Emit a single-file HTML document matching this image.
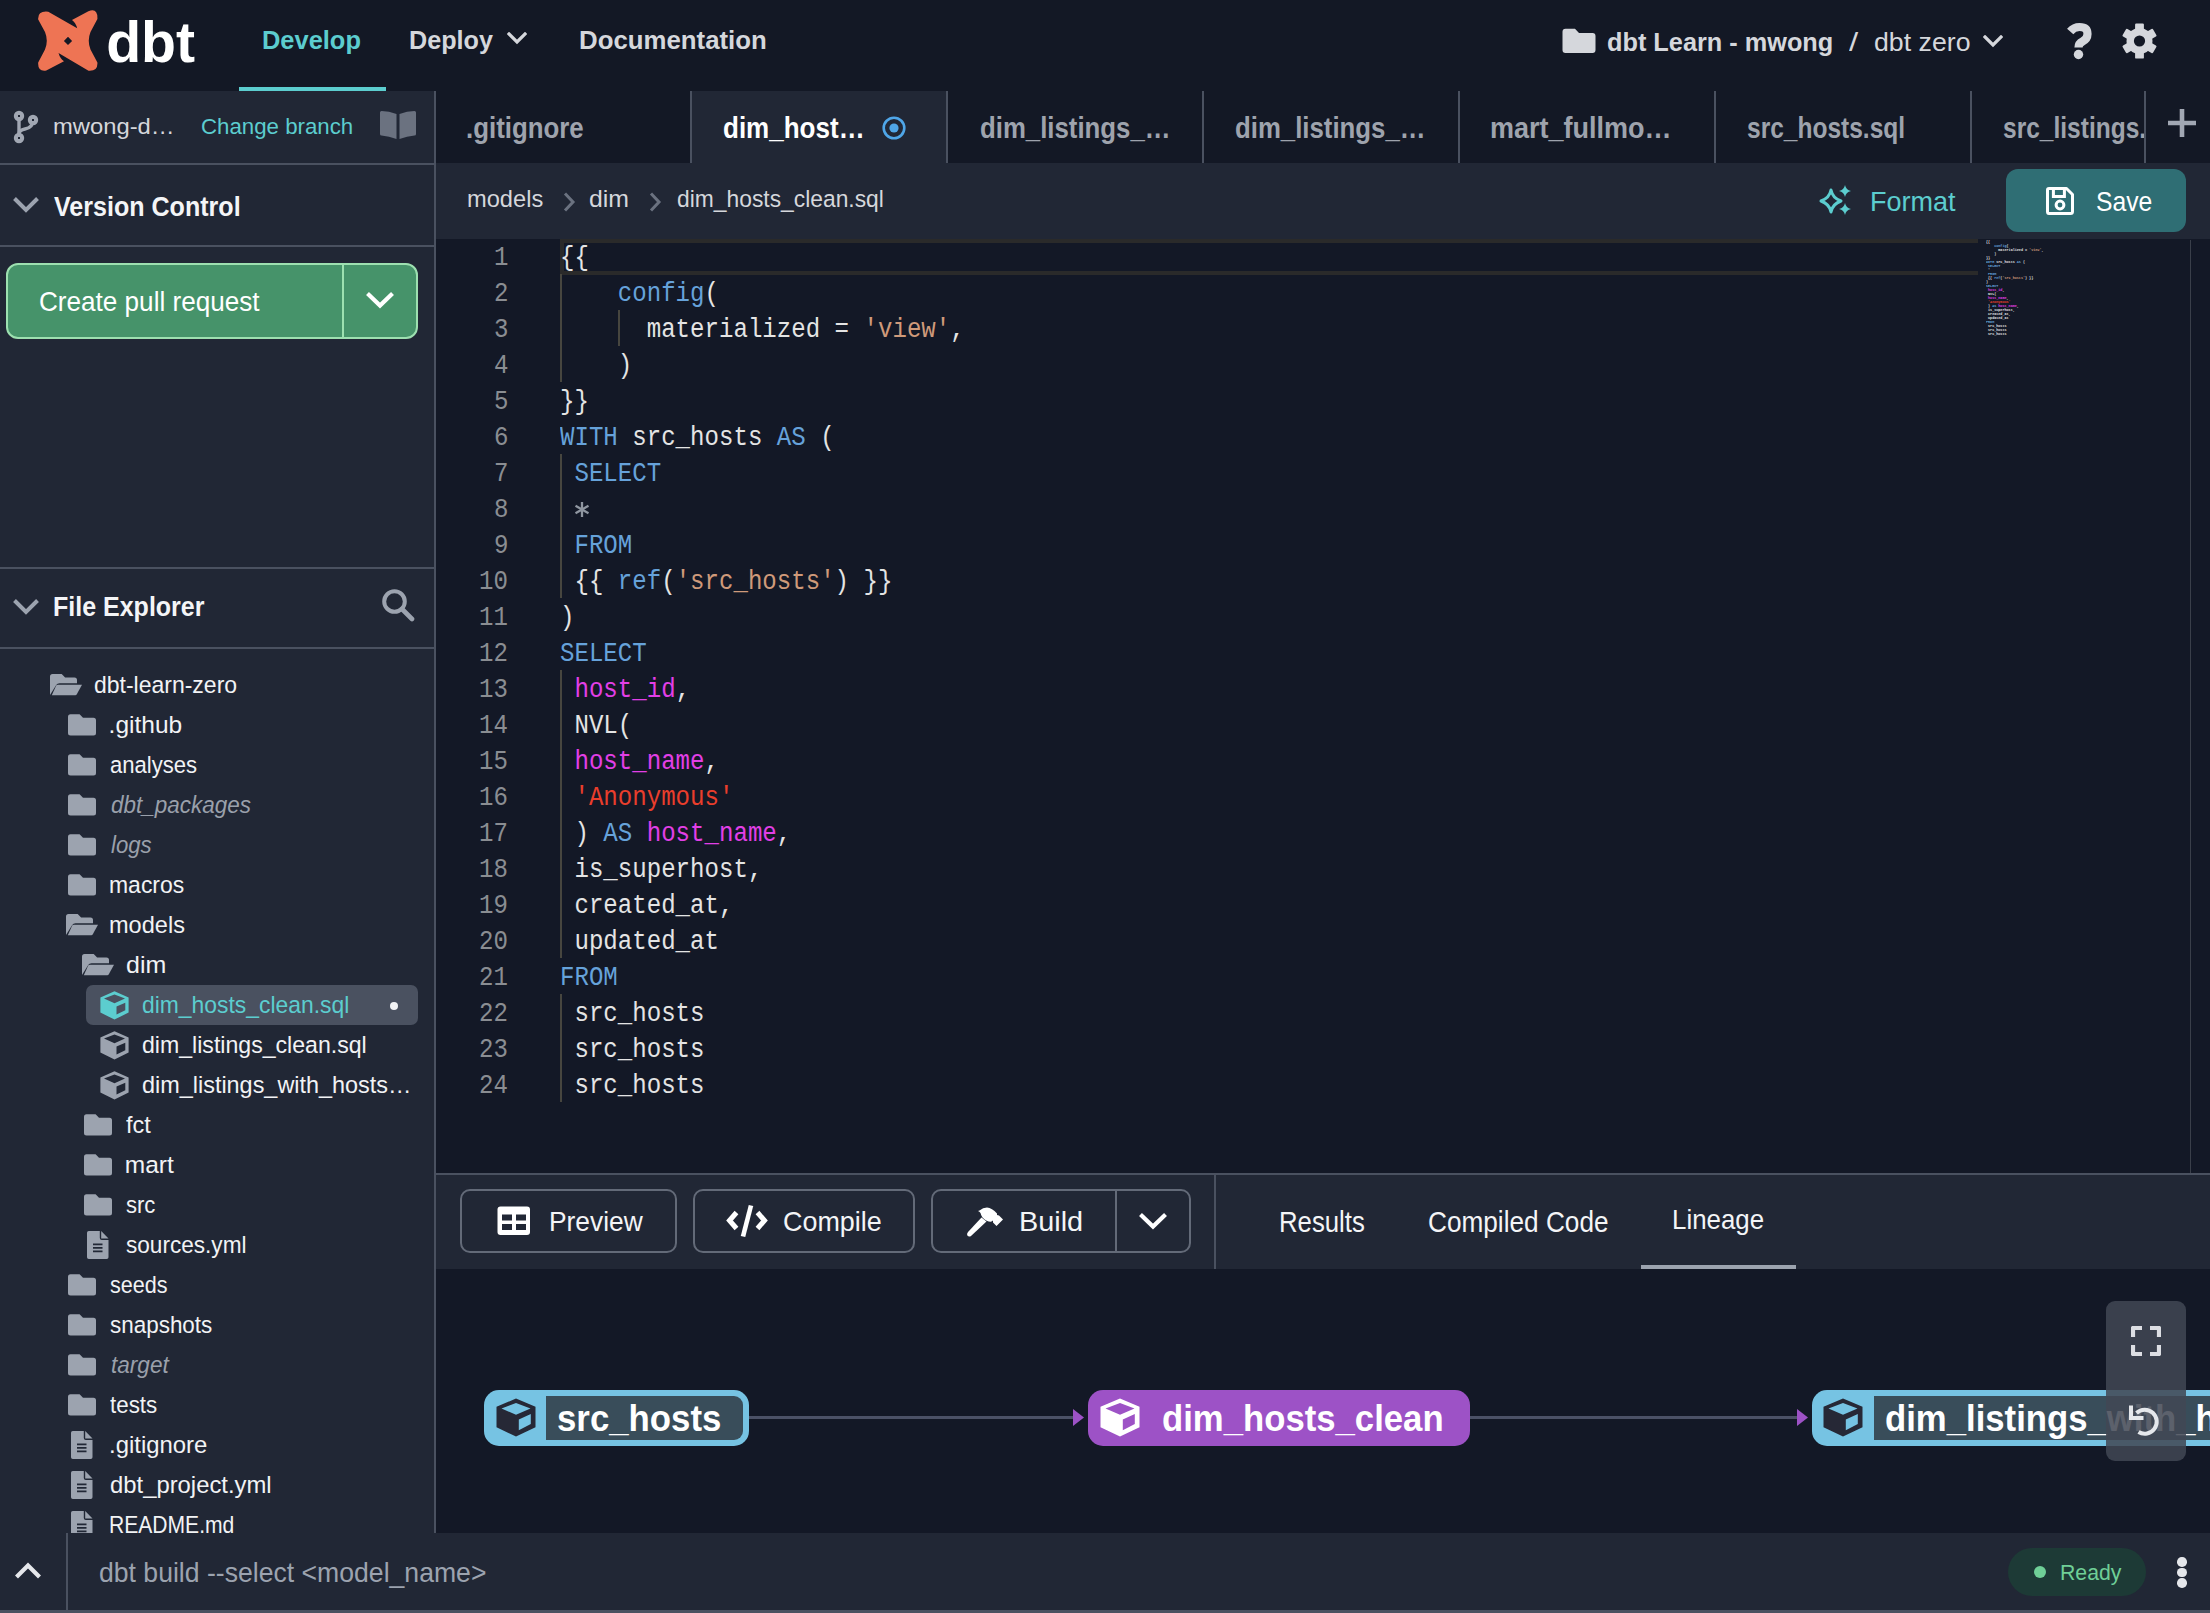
<!DOCTYPE html>
<html><head><meta charset="utf-8"><style>
html,body{margin:0;padding:0;width:2210px;height:1613px;overflow:hidden;background:#131826;}
body>div{position:absolute;}
.tS,.tM{position:absolute;white-space:pre;line-height:1;transform-origin:0 0;}
.tS{font-family:"Liberation Sans",sans-serif;}
.tM{font-family:"Liberation Mono",monospace;}
</style></head><body>
<div style="left:0px;top:0px;width:2210px;height:91px;background:#131825;"></div>
<div style="left:0px;top:91px;width:434px;height:1442px;background:#212735;"></div>
<div style="left:434px;top:91px;width:2px;height:1442px;background:#4a5160;"></div>
<div style="left:0px;top:163px;width:434px;height:2px;background:#4a5160;"></div>
<div style="left:0px;top:245px;width:434px;height:2px;background:#4a5160;"></div>
<div style="left:0px;top:567px;width:434px;height:2px;background:#4a5160;"></div>
<div style="left:0px;top:647px;width:434px;height:2px;background:#4a5160;"></div>
<div style="left:239px;top:87px;width:147px;height:4px;background:#5ccdcf;"></div>
<div style="left:436px;top:91px;width:1774px;height:72px;background:#131825;"></div>
<div style="left:692px;top:91px;width:254px;height:72px;background:#212735;"></div>
<div style="left:690px;top:91px;width:2px;height:72px;background:#4a5160;"></div>
<div style="left:946px;top:91px;width:2px;height:72px;background:#4a5160;"></div>
<div style="left:1202px;top:91px;width:2px;height:72px;background:#4a5160;"></div>
<div style="left:1458px;top:91px;width:2px;height:72px;background:#4a5160;"></div>
<div style="left:1714px;top:91px;width:2px;height:72px;background:#4a5160;"></div>
<div style="left:1970px;top:91px;width:2px;height:72px;background:#4a5160;"></div>
<div style="left:2144px;top:91px;width:2px;height:72px;background:#4a5160;"></div>
<div style="left:436px;top:163px;width:1774px;height:76px;background:#212735;"></div>
<div style="left:436px;top:239px;width:1774px;height:934px;background:#131826;"></div>
<div style="left:560px;top:239px;width:1418px;height:36px;background:transparent;border:4px solid #2a2a2a;box-sizing:border-box;border-right:none;"></div>
<div style="left:2190px;top:240px;width:1px;height:933px;background:#3a3f4a;"></div>
<div style="left:436px;top:1173px;width:1774px;height:2px;background:#4a5160;"></div>
<div style="left:436px;top:1175px;width:1774px;height:94px;background:#212735;"></div>
<div style="left:1214px;top:1175px;width:2px;height:94px;background:#4a5160;"></div>
<div style="left:1641px;top:1265px;width:155px;height:4px;background:#9ca3af;"></div>
<div style="left:436px;top:1269px;width:1774px;height:264px;background:#131826;"></div>
<div style="left:6px;top:263px;width:412px;height:76px;background:#46936a;border:2px solid #9de0b0;border-radius:12px;box-sizing:border-box;"></div>
<div style="left:342px;top:265px;width:2px;height:72px;background:#9de0b0;"></div>
<div style="left:2006px;top:169px;width:180px;height:63px;background:#2f6e74;border-radius:12px;"></div>
<div style="left:460px;top:1189px;width:217px;height:64px;background:transparent;border:2px solid #636a78;border-radius:10px;box-sizing:border-box;"></div>
<div style="left:693px;top:1189px;width:222px;height:64px;background:transparent;border:2px solid #636a78;border-radius:10px;box-sizing:border-box;"></div>
<div style="left:931px;top:1189px;width:260px;height:64px;background:transparent;border:2px solid #636a78;border-radius:10px;box-sizing:border-box;"></div>
<div style="left:1115px;top:1191px;width:2px;height:60px;background:#636a78;"></div>
<div style="left:86px;top:985px;width:332px;height:40px;background:#4a5160;border-radius:7px;"></div>
<div style="left:748px;top:1416px;width:328px;height:3px;background:#4b5166;"></div>
<div style="left:1470px;top:1416px;width:328px;height:3px;background:#4b5166;"></div>
<svg style="position:absolute;left:1073px;top:1409px;" width="11" height="17" viewBox="0 0 11 17"><path d="M0 0 L11 8.5 L0 17Z" fill="#9d52c6"/></svg>
<svg style="position:absolute;left:1797px;top:1409px;" width="11" height="17" viewBox="0 0 11 17"><path d="M0 0 L11 8.5 L0 17Z" fill="#9d52c6"/></svg>
<div style="left:484px;top:1390px;width:265px;height:56px;background:#76c3e3;border-radius:15px;"></div>
<div style="left:546px;top:1396px;width:197px;height:44px;background:#394d5a;border-radius:0 9px 9px 0;"></div>
<div style="left:1088px;top:1390px;width:382px;height:56px;background:#9d52c6;border-radius:15px;"></div>
<div style="left:1812px;top:1390px;width:420px;height:56px;background:#76c3e3;border-radius:15px;"></div>
<div style="left:1874px;top:1396px;width:400px;height:44px;background:#394d5a;"></div>
<svg style="position:absolute;left:496px;top:1398px;" width="40" height="39" viewBox="0 0 40 39"><path fill="#262836" fill-rule="evenodd" d="M20 0.5 L39.5 8.8 L39.5 29.2 L20 38.5 L0.5 29.2 L0.5 8.8Z M5.5 10.5 L20 16.8 L34.5 10.5 L20 5 Z M22.8 21.5 L22.8 32.3 L34.8 26 L34.8 16Z"/></svg>
<svg style="position:absolute;left:1100px;top:1398px;" width="40" height="39" viewBox="0 0 40 39"><path fill="#ffffff" fill-rule="evenodd" d="M20 0.5 L39.5 8.8 L39.5 29.2 L20 38.5 L0.5 29.2 L0.5 8.8Z M5.5 10.5 L20 16.8 L34.5 10.5 L20 5 Z M22.8 21.5 L22.8 32.3 L34.8 26 L34.8 16Z"/></svg>
<svg style="position:absolute;left:1823px;top:1398px;" width="40" height="39" viewBox="0 0 40 39"><path fill="#262836" fill-rule="evenodd" d="M20 0.5 L39.5 8.8 L39.5 29.2 L20 38.5 L0.5 29.2 L0.5 8.8Z M5.5 10.5 L20 16.8 L34.5 10.5 L20 5 Z M22.8 21.5 L22.8 32.3 L34.8 26 L34.8 16Z"/></svg>
<svg style="position:absolute;left:34px;top:8px;" width="68" height="66" viewBox="0 0 68 66"><path fill="#ee7454" fill-rule="evenodd" d="M14.3 3.7 L43.2 20.3 Q41.5 14.5 38 12.1 L54.4 3.3 Q63.8 -0.5 63.4 11 L56.5 24 Q53 32.7 56.5 41.5 L63.4 54.5 Q64 63.5 54.5 62.8 L24.5 45 Q26 50.5 30 53.2 L12.3 62.6 Q3.5 64 4.2 54.5 L11 41.5 Q14.6 32.7 11 24 L4.2 11.5 Q3.5 2.5 14.3 3.7 Z M34 28.8 L38.1 32.9 L34 37 L29.9 32.9 Z"/></svg>
<svg style="position:absolute;left:507px;top:32px;" width="20" height="13" viewBox="0 0 20 13"><path d="M2 2 L10 10 L18 2" fill="none" stroke="#d5d7dc" stroke-width="3.2" stroke-linecap="square"/></svg>
<svg style="position:absolute;left:1983px;top:35px;" width="20" height="13" viewBox="0 0 20 13"><path d="M2 2 L10 10 L18 2" fill="none" stroke="#d5d7dc" stroke-width="3.2" stroke-linecap="square"/></svg>
<svg style="position:absolute;left:1562px;top:28px;" width="34" height="26" viewBox="0 0 34 26"><path fill="#d5d7dc" d="M3.5 0.8 H13 L17 5 H30.5 A3 3 0 0 1 33.5 8 V22 A3 3 0 0 1 30.5 25 H3.5 A3 3 0 0 1 0.5 22 V3.8 A3 3 0 0 1 3.5 0.8Z"/></svg>
<svg style="position:absolute;left:2064px;top:20px;" width="32" height="42" viewBox="0 0 32 42"><path d="M6.2 11.5 Q10 7 15.5 7 Q23.5 7 23.5 14 Q23.5 19 18.5 21.5 Q14.5 23.5 14.5 27.5" fill="none" stroke="#d5d7dc" stroke-width="8.2" stroke-linejoin="round"/><circle cx="14.5" cy="34.5" r="4.7" fill="#d5d7dc"/></svg>
<svg style="position:absolute;left:2122px;top:23px;" width="35" height="36" viewBox="0 0 35 36"><g transform="translate(17.5 18)" fill="#d5d7dc"><circle r="13"/><rect x="-4.4" y="-17.6" width="8.8" height="35.2" rx="1.2"/><rect x="-4.4" y="-17.6" width="8.8" height="35.2" rx="1.2" transform="rotate(60)"/><rect x="-4.4" y="-17.6" width="8.8" height="35.2" rx="1.2" transform="rotate(120)"/><circle r="5.6" fill="#131825"/></g></svg>
<svg style="position:absolute;left:10px;top:108px;" width="30" height="38" viewBox="0 0 30 38"><g fill="#a1a7b3"><circle cx="9" cy="8" r="5.2"/><circle cx="23" cy="12" r="5.2"/><circle cx="9" cy="30" r="5.2"/><path d="M9 8 V30" stroke="#a1a7b3" stroke-width="3.4"/><path d="M9 26 Q9 22 15 21 Q23 19.5 23 12" fill="none" stroke="#a1a7b3" stroke-width="3.4"/></g><g fill="#212735"><rect x="8" y="7" width="2" height="2"/><rect x="22" y="11" width="2" height="2"/><rect x="8" y="29" width="2" height="2"/></g></svg>
<svg style="position:absolute;left:379px;top:110px;" width="38" height="30" viewBox="0 0 38 30"><g fill="#6b7280"><path d="M1 2.5 Q1 1 2.5 1 Q10 1 17.5 4 V29 Q10 26 2.5 25.5 Q1 25.5 1 24 Z"/><path d="M37 2.5 Q37 1 35.5 1 Q28 1 20.5 4 V29 Q28 26 35.5 25.5 Q37 25.5 37 24 Z"/></g></svg>
<svg style="position:absolute;left:12px;top:196px;" width="28" height="18" viewBox="0 0 28 18"><path d="M2.5 2.5 L14 14 L25.5 2.5" fill="none" stroke="#9ca3af" stroke-width="4"/></svg>
<svg style="position:absolute;left:12px;top:598px;" width="28" height="18" viewBox="0 0 28 18"><path d="M2.5 2.5 L14 14 L25.5 2.5" fill="none" stroke="#9ca3af" stroke-width="4"/></svg>
<svg style="position:absolute;left:365px;top:291px;" width="30" height="19" viewBox="0 0 30 19"><path d="M2.5 2.5 L15 14.5 L27.5 2.5" fill="none" stroke="#ffffff" stroke-width="4.2"/></svg>
<svg style="position:absolute;left:381px;top:588px;" width="34" height="34" viewBox="0 0 34 34"><circle cx="13.5" cy="13.5" r="10.3" fill="none" stroke="#9ca3af" stroke-width="4"/><path d="M21 21 L31 31" stroke="#9ca3af" stroke-width="4.6" stroke-linecap="round"/></svg>
<svg style="position:absolute;left:50px;top:674px;" width="32" height="22" viewBox="0 0 32 22"><path fill="#9ca3af" d="M2.5 0 H11.7 L15.1 3.6 H24.5 A2.5 2.5 0 0 1 27 6.1 V9.2 H9.5 Q7.3 9.2 6.2 11 L0 21 V2.5 A2.5 2.5 0 0 1 2.5 0Z"/><path fill="#9ca3af" d="M6.3 11.2 Q7 10.7 8 10.7 H32 L26.8 20.3 Q26.3 21.2 25.3 21.2 H1.8 Z"/></svg>
<svg style="position:absolute;left:68px;top:714px;" width="28" height="22" viewBox="0 0 28 22"><path fill="#9ca3af" d="M2.5 0.2 H11.6 L15 3.8 H25.5 A2.5 2.5 0 0 1 28 6.3 V19 A2.5 2.5 0 0 1 25.5 21.5 H2.5 A2.5 2.5 0 0 1 0 19 V2.7 A2.5 2.5 0 0 1 2.5 0.2Z"/></svg>
<svg style="position:absolute;left:68px;top:754px;" width="28" height="22" viewBox="0 0 28 22"><path fill="#9ca3af" d="M2.5 0.2 H11.6 L15 3.8 H25.5 A2.5 2.5 0 0 1 28 6.3 V19 A2.5 2.5 0 0 1 25.5 21.5 H2.5 A2.5 2.5 0 0 1 0 19 V2.7 A2.5 2.5 0 0 1 2.5 0.2Z"/></svg>
<svg style="position:absolute;left:68px;top:794px;" width="28" height="22" viewBox="0 0 28 22"><path fill="#9ca3af" d="M2.5 0.2 H11.6 L15 3.8 H25.5 A2.5 2.5 0 0 1 28 6.3 V19 A2.5 2.5 0 0 1 25.5 21.5 H2.5 A2.5 2.5 0 0 1 0 19 V2.7 A2.5 2.5 0 0 1 2.5 0.2Z"/></svg>
<svg style="position:absolute;left:68px;top:834px;" width="28" height="22" viewBox="0 0 28 22"><path fill="#9ca3af" d="M2.5 0.2 H11.6 L15 3.8 H25.5 A2.5 2.5 0 0 1 28 6.3 V19 A2.5 2.5 0 0 1 25.5 21.5 H2.5 A2.5 2.5 0 0 1 0 19 V2.7 A2.5 2.5 0 0 1 2.5 0.2Z"/></svg>
<svg style="position:absolute;left:68px;top:874px;" width="28" height="22" viewBox="0 0 28 22"><path fill="#9ca3af" d="M2.5 0.2 H11.6 L15 3.8 H25.5 A2.5 2.5 0 0 1 28 6.3 V19 A2.5 2.5 0 0 1 25.5 21.5 H2.5 A2.5 2.5 0 0 1 0 19 V2.7 A2.5 2.5 0 0 1 2.5 0.2Z"/></svg>
<svg style="position:absolute;left:66px;top:914px;" width="32" height="22" viewBox="0 0 32 22"><path fill="#9ca3af" d="M2.5 0 H11.7 L15.1 3.6 H24.5 A2.5 2.5 0 0 1 27 6.1 V9.2 H9.5 Q7.3 9.2 6.2 11 L0 21 V2.5 A2.5 2.5 0 0 1 2.5 0Z"/><path fill="#9ca3af" d="M6.3 11.2 Q7 10.7 8 10.7 H32 L26.8 20.3 Q26.3 21.2 25.3 21.2 H1.8 Z"/></svg>
<svg style="position:absolute;left:82px;top:954px;" width="32" height="22" viewBox="0 0 32 22"><path fill="#9ca3af" d="M2.5 0 H11.7 L15.1 3.6 H24.5 A2.5 2.5 0 0 1 27 6.1 V9.2 H9.5 Q7.3 9.2 6.2 11 L0 21 V2.5 A2.5 2.5 0 0 1 2.5 0Z"/><path fill="#9ca3af" d="M6.3 11.2 Q7 10.7 8 10.7 H32 L26.8 20.3 Q26.3 21.2 25.3 21.2 H1.8 Z"/></svg>
<svg style="position:absolute;left:100px;top:991px;" width="29" height="29" viewBox="0 0 29 29"><path fill="#5ccdcf" fill-rule="evenodd" d="M14.5 0.3 L28.6 6.4 L28.6 21.5 L14.5 28.6 L0.4 21.5 L0.4 6.4Z M4 7.6 L14.5 12.2 L25 7.6 L14.5 3.6 Z M16.5 15.5 L16.5 23.6 L25.3 19.2 L25.3 11.7Z"/></svg>
<svg style="position:absolute;left:100px;top:1031px;" width="29" height="29" viewBox="0 0 29 29"><path fill="#9ca3af" fill-rule="evenodd" d="M14.5 0.3 L28.6 6.4 L28.6 21.5 L14.5 28.6 L0.4 21.5 L0.4 6.4Z M4 7.6 L14.5 12.2 L25 7.6 L14.5 3.6 Z M16.5 15.5 L16.5 23.6 L25.3 19.2 L25.3 11.7Z"/></svg>
<svg style="position:absolute;left:100px;top:1071px;" width="29" height="29" viewBox="0 0 29 29"><path fill="#9ca3af" fill-rule="evenodd" d="M14.5 0.3 L28.6 6.4 L28.6 21.5 L14.5 28.6 L0.4 21.5 L0.4 6.4Z M4 7.6 L14.5 12.2 L25 7.6 L14.5 3.6 Z M16.5 15.5 L16.5 23.6 L25.3 19.2 L25.3 11.7Z"/></svg>
<svg style="position:absolute;left:84px;top:1114px;" width="28" height="22" viewBox="0 0 28 22"><path fill="#9ca3af" d="M2.5 0.2 H11.6 L15 3.8 H25.5 A2.5 2.5 0 0 1 28 6.3 V19 A2.5 2.5 0 0 1 25.5 21.5 H2.5 A2.5 2.5 0 0 1 0 19 V2.7 A2.5 2.5 0 0 1 2.5 0.2Z"/></svg>
<svg style="position:absolute;left:84px;top:1154px;" width="28" height="22" viewBox="0 0 28 22"><path fill="#9ca3af" d="M2.5 0.2 H11.6 L15 3.8 H25.5 A2.5 2.5 0 0 1 28 6.3 V19 A2.5 2.5 0 0 1 25.5 21.5 H2.5 A2.5 2.5 0 0 1 0 19 V2.7 A2.5 2.5 0 0 1 2.5 0.2Z"/></svg>
<svg style="position:absolute;left:84px;top:1194px;" width="28" height="22" viewBox="0 0 28 22"><path fill="#9ca3af" d="M2.5 0.2 H11.6 L15 3.8 H25.5 A2.5 2.5 0 0 1 28 6.3 V19 A2.5 2.5 0 0 1 25.5 21.5 H2.5 A2.5 2.5 0 0 1 0 19 V2.7 A2.5 2.5 0 0 1 2.5 0.2Z"/></svg>
<svg style="position:absolute;left:87px;top:1231px;" width="22" height="28" viewBox="0 0 22 28"><path fill="#9ca3af" fill-rule="evenodd" d="M1.8 0 H12.8 V7 Q12.8 9 14.8 9 H21.5 V26.2 Q21.5 28 19.7 28 H1.8 Q0 28 0 26.2 V1.8 Q0 0 1.8 0Z M6 12.5 H15.5 V14.3 H6Z M6 16 H15.5 V17.8 H6Z M6 19.5 H15.5 V21.3 H6Z"/><path fill="#9ca3af" d="M14.2 0 L21.5 7.6 H14.2Z"/></svg>
<svg style="position:absolute;left:68px;top:1274px;" width="28" height="22" viewBox="0 0 28 22"><path fill="#9ca3af" d="M2.5 0.2 H11.6 L15 3.8 H25.5 A2.5 2.5 0 0 1 28 6.3 V19 A2.5 2.5 0 0 1 25.5 21.5 H2.5 A2.5 2.5 0 0 1 0 19 V2.7 A2.5 2.5 0 0 1 2.5 0.2Z"/></svg>
<svg style="position:absolute;left:68px;top:1314px;" width="28" height="22" viewBox="0 0 28 22"><path fill="#9ca3af" d="M2.5 0.2 H11.6 L15 3.8 H25.5 A2.5 2.5 0 0 1 28 6.3 V19 A2.5 2.5 0 0 1 25.5 21.5 H2.5 A2.5 2.5 0 0 1 0 19 V2.7 A2.5 2.5 0 0 1 2.5 0.2Z"/></svg>
<svg style="position:absolute;left:68px;top:1354px;" width="28" height="22" viewBox="0 0 28 22"><path fill="#9ca3af" d="M2.5 0.2 H11.6 L15 3.8 H25.5 A2.5 2.5 0 0 1 28 6.3 V19 A2.5 2.5 0 0 1 25.5 21.5 H2.5 A2.5 2.5 0 0 1 0 19 V2.7 A2.5 2.5 0 0 1 2.5 0.2Z"/></svg>
<svg style="position:absolute;left:68px;top:1394px;" width="28" height="22" viewBox="0 0 28 22"><path fill="#9ca3af" d="M2.5 0.2 H11.6 L15 3.8 H25.5 A2.5 2.5 0 0 1 28 6.3 V19 A2.5 2.5 0 0 1 25.5 21.5 H2.5 A2.5 2.5 0 0 1 0 19 V2.7 A2.5 2.5 0 0 1 2.5 0.2Z"/></svg>
<svg style="position:absolute;left:71px;top:1431px;" width="22" height="28" viewBox="0 0 22 28"><path fill="#9ca3af" fill-rule="evenodd" d="M1.8 0 H12.8 V7 Q12.8 9 14.8 9 H21.5 V26.2 Q21.5 28 19.7 28 H1.8 Q0 28 0 26.2 V1.8 Q0 0 1.8 0Z M6 12.5 H15.5 V14.3 H6Z M6 16 H15.5 V17.8 H6Z M6 19.5 H15.5 V21.3 H6Z"/><path fill="#9ca3af" d="M14.2 0 L21.5 7.6 H14.2Z"/></svg>
<svg style="position:absolute;left:71px;top:1471px;" width="22" height="28" viewBox="0 0 22 28"><path fill="#9ca3af" fill-rule="evenodd" d="M1.8 0 H12.8 V7 Q12.8 9 14.8 9 H21.5 V26.2 Q21.5 28 19.7 28 H1.8 Q0 28 0 26.2 V1.8 Q0 0 1.8 0Z M6 12.5 H15.5 V14.3 H6Z M6 16 H15.5 V17.8 H6Z M6 19.5 H15.5 V21.3 H6Z"/><path fill="#9ca3af" d="M14.2 0 L21.5 7.6 H14.2Z"/></svg>
<svg style="position:absolute;left:71px;top:1511px;" width="22" height="28" viewBox="0 0 22 28"><path fill="#9ca3af" fill-rule="evenodd" d="M1.8 0 H12.8 V7 Q12.8 9 14.8 9 H21.5 V26.2 Q21.5 28 19.7 28 H1.8 Q0 28 0 26.2 V1.8 Q0 0 1.8 0Z M6 12.5 H15.5 V14.3 H6Z M6 16 H15.5 V17.8 H6Z M6 19.5 H15.5 V21.3 H6Z"/><path fill="#9ca3af" d="M14.2 0 L21.5 7.6 H14.2Z"/></svg>
<div style="left:389.5px;top:1002px;width:8px;height:8px;background:#f2f3f5;border-radius:50%;"></div>
<svg style="position:absolute;left:881px;top:115px;" width="26" height="26" viewBox="0 0 26 26"><circle cx="13" cy="13" r="10.3" fill="none" stroke="#4fa6e8" stroke-width="2.6"/><circle cx="13" cy="13" r="4.6" fill="#4fa6e8"/></svg>
<svg style="position:absolute;left:2167px;top:108px;" width="30" height="30" viewBox="0 0 30 30"><path d="M15 1 V29 M1 15 H29" stroke="#a1a7b3" stroke-width="4.6"/></svg>
<svg style="position:absolute;left:562px;top:191px;" width="14" height="22" viewBox="0 0 14 22"><path d="M3 2.5 L11 11 L3 19.5" fill="none" stroke="#6b7280" stroke-width="3"/></svg>
<svg style="position:absolute;left:648px;top:191px;" width="14" height="22" viewBox="0 0 14 22"><path d="M3 2.5 L11 11 L3 19.5" fill="none" stroke="#6b7280" stroke-width="3"/></svg>
<svg style="position:absolute;left:1817px;top:183px;" width="36" height="32" viewBox="0 0 36 32"><path d="M14 7 Q15.5 15 24 18 Q15.5 21 14 29 Q12.5 21 4 18 Q12.5 15 14 7Z" fill="none" stroke="#5ccdcf" stroke-width="3" stroke-linejoin="round"/><path d="M28 2 Q29 7 34 8 Q29 9 28 14 Q27 9 22 8 Q27 7 28 2Z" fill="#5ccdcf"/><path d="M28 22 Q29 27 34 28 Q29 29 28 34 Q27 29 22 28 Q27 27 28 22Z" fill="#5ccdcf" transform="translate(0 -2)"/></svg>
<svg style="position:absolute;left:2045px;top:186px;" width="30" height="30" viewBox="0 0 30 30"><path d="M4 2.5 H21.5 L27.5 8.5 V25.5 Q27.5 27.5 25.5 27.5 H4 Q2.5 27.5 2.5 25.5 V4 Q2.5 2.5 4 2.5Z" fill="none" stroke="#fff" stroke-width="3" stroke-linejoin="round"/><path d="M8.4 2.5 V10.5 H19.4 V2.5" fill="none" stroke="#fff" stroke-width="3"/><circle cx="15" cy="19" r="3.9" fill="none" stroke="#fff" stroke-width="3"/></svg>
<svg style="position:absolute;left:497px;top:1206px;" width="34" height="30" viewBox="0 0 34 30"><rect x="0.5" y="0.5" width="32.5" height="28.5" rx="3" fill="#fff"/><g fill="#212735"><rect x="5" y="8.5" width="10" height="6"/><rect x="19" y="8.5" width="10" height="6"/><rect x="5" y="18" width="10" height="6"/><rect x="19" y="18" width="10" height="6"/></g></svg>
<svg style="position:absolute;left:726px;top:1204px;" width="42" height="34" viewBox="0 0 42 34"><path d="M10.5 8.5 L3.5 16.5 L10.5 24.5 M31.5 8.5 L38.5 16.5 L31.5 24.5" fill="none" stroke="#fff" stroke-width="5"/><path d="M25 1.5 L17 32.5" stroke="#fff" stroke-width="4.6"/></svg>
<svg style="position:absolute;left:966px;top:1204px;" width="38" height="34" viewBox="0 0 38 34"><path fill="#fff" d="M13.5 6.5 Q17 3.5 21 3.5 Q26 3.8 31 9.5 L31 11 L33 11.5 L37 15.5 L30.5 22 L27 18.5 L27 16.5 L25 17.8 Q21 18 16.5 13.5 Q15 11.5 14.5 9 Q13.5 7.5 12 7 Z"/><path fill="#fff" d="M15.5 13.5 L20.5 17.5 L5 32 Q3 33.2 1.5 31.8 Q0.3 30 2 28Z"/></svg>
<svg style="position:absolute;left:1138px;top:1212px;" width="30" height="19" viewBox="0 0 30 19"><path d="M2.5 2.5 L15 14.5 L27.5 2.5" fill="none" stroke="#fff" stroke-width="4.2"/></svg>
<div style="left:560px;top:274px;width:2px;height:108px;background:#47463f;"></div>
<div style="left:618px;top:310px;width:2px;height:36px;background:#47463f;"></div>
<div style="left:560px;top:454px;width:2px;height:144px;background:#47463f;"></div>
<div style="left:560px;top:670px;width:2px;height:288px;background:#47463f;"></div>
<div style="left:560px;top:994px;width:2px;height:108px;background:#47463f;"></div>
<div class="tM" style="left:559.5px;top:245.3px;font-size:27px;transform:scaleX(0.8920);"><span style="color:#e4e4e4;">{{</span></div>
<div class="tM" style="left:493.6px;top:245.3px;font-size:27px;color:#8a8d92;transform:scaleX(0.8920);">1</div>
<div class="tM" style="left:559.5px;top:281.3px;font-size:27px;transform:scaleX(0.8920);"><span style="color:#e4e4e4;">    </span><span style="color:#66a2da;">config</span><span style="color:#e4e4e4;">(</span></div>
<div class="tM" style="left:493.6px;top:281.3px;font-size:27px;color:#8a8d92;transform:scaleX(0.8920);">2</div>
<div class="tM" style="left:559.5px;top:317.3px;font-size:27px;transform:scaleX(0.8920);"><span style="color:#e4e4e4;">      materialized = </span><span style="color:#cf9a7a;">'view'</span><span style="color:#e4e4e4;">,</span></div>
<div class="tM" style="left:493.6px;top:317.3px;font-size:27px;color:#8a8d92;transform:scaleX(0.8920);">3</div>
<div class="tM" style="left:559.5px;top:353.3px;font-size:27px;transform:scaleX(0.8920);"><span style="color:#e4e4e4;">    )</span></div>
<div class="tM" style="left:493.6px;top:353.3px;font-size:27px;color:#8a8d92;transform:scaleX(0.8920);">4</div>
<div class="tM" style="left:559.5px;top:389.3px;font-size:27px;transform:scaleX(0.8920);"><span style="color:#e4e4e4;">}}</span></div>
<div class="tM" style="left:493.6px;top:389.3px;font-size:27px;color:#8a8d92;transform:scaleX(0.8920);">5</div>
<div class="tM" style="left:559.5px;top:425.3px;font-size:27px;transform:scaleX(0.8920);"><span style="color:#66a2da;">WITH</span><span style="color:#e4e4e4;"> src_hosts </span><span style="color:#66a2da;">AS</span><span style="color:#e4e4e4;"> (</span></div>
<div class="tM" style="left:493.6px;top:425.3px;font-size:27px;color:#8a8d92;transform:scaleX(0.8920);">6</div>
<div class="tM" style="left:559.5px;top:461.3px;font-size:27px;transform:scaleX(0.8920);"><span style="color:#e4e4e4;"> </span><span style="color:#66a2da;">SELECT</span></div>
<div class="tM" style="left:493.6px;top:461.3px;font-size:27px;color:#8a8d92;transform:scaleX(0.8920);">7</div>
<div class="tM" style="left:559.5px;top:497.3px;font-size:27px;transform:scaleX(0.8920);"><span style="color:#e4e4e4;"> </span></div>
<div class="tM" style="left:493.6px;top:497.3px;font-size:27px;color:#8a8d92;transform:scaleX(0.8920);">8</div>
<div class="tM" style="left:559.5px;top:533.3px;font-size:27px;transform:scaleX(0.8920);"><span style="color:#e4e4e4;"> </span><span style="color:#66a2da;">FROM</span></div>
<div class="tM" style="left:493.6px;top:533.3px;font-size:27px;color:#8a8d92;transform:scaleX(0.8920);">9</div>
<div class="tM" style="left:559.5px;top:569.3px;font-size:27px;transform:scaleX(0.8920);"><span style="color:#e4e4e4;"> {{ </span><span style="color:#66a2da;">ref</span><span style="color:#e4e4e4;">(</span><span style="color:#cf9a7a;">'src_hosts'</span><span style="color:#e4e4e4;">) }}</span></div>
<div class="tM" style="left:479.1px;top:569.3px;font-size:27px;color:#8a8d92;transform:scaleX(0.8920);">10</div>
<div class="tM" style="left:559.5px;top:605.3px;font-size:27px;transform:scaleX(0.8920);"><span style="color:#e4e4e4;">)</span></div>
<div class="tM" style="left:479.1px;top:605.3px;font-size:27px;color:#8a8d92;transform:scaleX(0.8920);">11</div>
<div class="tM" style="left:559.5px;top:641.3px;font-size:27px;transform:scaleX(0.8920);"><span style="color:#66a2da;">SELECT</span></div>
<div class="tM" style="left:479.1px;top:641.3px;font-size:27px;color:#8a8d92;transform:scaleX(0.8920);">12</div>
<div class="tM" style="left:559.5px;top:677.3px;font-size:27px;transform:scaleX(0.8920);"><span style="color:#e4e4e4;"> </span><span style="color:#e23fe6;">host_id</span><span style="color:#e4e4e4;">,</span></div>
<div class="tM" style="left:479.1px;top:677.3px;font-size:27px;color:#8a8d92;transform:scaleX(0.8920);">13</div>
<div class="tM" style="left:559.5px;top:713.3px;font-size:27px;transform:scaleX(0.8920);"><span style="color:#e4e4e4;"> NVL(</span></div>
<div class="tM" style="left:479.1px;top:713.3px;font-size:27px;color:#8a8d92;transform:scaleX(0.8920);">14</div>
<div class="tM" style="left:559.5px;top:749.3px;font-size:27px;transform:scaleX(0.8920);"><span style="color:#e4e4e4;"> </span><span style="color:#e23fe6;">host_name</span><span style="color:#e4e4e4;">,</span></div>
<div class="tM" style="left:479.1px;top:749.3px;font-size:27px;color:#8a8d92;transform:scaleX(0.8920);">15</div>
<div class="tM" style="left:559.5px;top:785.3px;font-size:27px;transform:scaleX(0.8920);"><span style="color:#e4e4e4;"> </span><span style="color:#ea3e2c;">'Anonymous'</span></div>
<div class="tM" style="left:479.1px;top:785.3px;font-size:27px;color:#8a8d92;transform:scaleX(0.8920);">16</div>
<div class="tM" style="left:559.5px;top:821.3px;font-size:27px;transform:scaleX(0.8920);"><span style="color:#e4e4e4;"> ) </span><span style="color:#66a2da;">AS</span><span style="color:#e4e4e4;"> </span><span style="color:#e23fe6;">host_name</span><span style="color:#e4e4e4;">,</span></div>
<div class="tM" style="left:479.1px;top:821.3px;font-size:27px;color:#8a8d92;transform:scaleX(0.8920);">17</div>
<div class="tM" style="left:559.5px;top:857.3px;font-size:27px;transform:scaleX(0.8920);"><span style="color:#e4e4e4;"> is_superhost,</span></div>
<div class="tM" style="left:479.1px;top:857.3px;font-size:27px;color:#8a8d92;transform:scaleX(0.8920);">18</div>
<div class="tM" style="left:559.5px;top:893.3px;font-size:27px;transform:scaleX(0.8920);"><span style="color:#e4e4e4;"> created_at,</span></div>
<div class="tM" style="left:479.1px;top:893.3px;font-size:27px;color:#8a8d92;transform:scaleX(0.8920);">19</div>
<div class="tM" style="left:559.5px;top:929.3px;font-size:27px;transform:scaleX(0.8920);"><span style="color:#e4e4e4;"> updated_at</span></div>
<div class="tM" style="left:479.1px;top:929.3px;font-size:27px;color:#8a8d92;transform:scaleX(0.8920);">20</div>
<div class="tM" style="left:559.5px;top:965.3px;font-size:27px;transform:scaleX(0.8920);"><span style="color:#66a2da;">FROM</span></div>
<div class="tM" style="left:479.1px;top:965.3px;font-size:27px;color:#8a8d92;transform:scaleX(0.8920);">21</div>
<div class="tM" style="left:559.5px;top:1001.3px;font-size:27px;transform:scaleX(0.8920);"><span style="color:#e4e4e4;"> src_hosts</span></div>
<div class="tM" style="left:479.1px;top:1001.3px;font-size:27px;color:#8a8d92;transform:scaleX(0.8920);">22</div>
<div class="tM" style="left:559.5px;top:1037.3px;font-size:27px;transform:scaleX(0.8920);"><span style="color:#e4e4e4;"> src_hosts</span></div>
<div class="tM" style="left:479.1px;top:1037.3px;font-size:27px;color:#8a8d92;transform:scaleX(0.8920);">23</div>
<div class="tM" style="left:559.5px;top:1073.3px;font-size:27px;transform:scaleX(0.8920);"><span style="color:#e4e4e4;"> src_hosts</span></div>
<div class="tM" style="left:479.1px;top:1073.3px;font-size:27px;color:#8a8d92;transform:scaleX(0.8920);">24</div>
<svg style="position:absolute;left:572px;top:500px;" width="20" height="20" viewBox="0 0 20 20"><g stroke="#8f96a0" stroke-width="2.3"><path d="M10 2 V17"/><path d="M3.5 5.75 L16.5 13.25"/><path d="M3.5 13.25 L16.5 5.75"/></g></svg>
<div class="tM" style="left:1986px;top:239.5px;font-size:27px;line-height:28.17px;transform:scale(0.1267,0.142);font-weight:700;"><span style="color:#e4e4e4">{{</span>
<span style="color:#e4e4e4">    </span><span style="color:#66a2da">config</span><span style="color:#e4e4e4">(</span>
<span style="color:#e4e4e4">      materialized = </span><span style="color:#cf9a7a">'view'</span><span style="color:#e4e4e4">,</span>
<span style="color:#e4e4e4">    )</span>
<span style="color:#e4e4e4">}}</span>
<span style="color:#66a2da">WITH</span><span style="color:#e4e4e4"> src_hosts </span><span style="color:#66a2da">AS</span><span style="color:#e4e4e4"> (</span>
<span style="color:#e4e4e4"> </span><span style="color:#66a2da">SELECT</span>
 <span style="color:#8f96a0">*</span>
<span style="color:#e4e4e4"> </span><span style="color:#66a2da">FROM</span>
<span style="color:#e4e4e4"> {{ </span><span style="color:#66a2da">ref</span><span style="color:#e4e4e4">(</span><span style="color:#cf9a7a">'src_hosts'</span><span style="color:#e4e4e4">) }}</span>
<span style="color:#e4e4e4">)</span>
<span style="color:#66a2da">SELECT</span>
<span style="color:#e4e4e4"> </span><span style="color:#e23fe6">host_id</span><span style="color:#e4e4e4">,</span>
<span style="color:#e4e4e4"> NVL(</span>
<span style="color:#e4e4e4"> </span><span style="color:#e23fe6">host_name</span><span style="color:#e4e4e4">,</span>
<span style="color:#e4e4e4"> </span><span style="color:#ea3e2c">'Anonymous'</span>
<span style="color:#e4e4e4"> ) </span><span style="color:#66a2da">AS</span><span style="color:#e4e4e4"> </span><span style="color:#e23fe6">host_name</span><span style="color:#e4e4e4">,</span>
<span style="color:#e4e4e4"> is_superhost,</span>
<span style="color:#e4e4e4"> created_at,</span>
<span style="color:#e4e4e4"> updated_at</span>
<span style="color:#66a2da">FROM</span>
<span style="color:#e4e4e4"> src_hosts</span>
<span style="color:#e4e4e4"> src_hosts</span>
<span style="color:#e4e4e4"> src_hosts</span></div>
<div class="tS" style="left:106.2px;top:13.6px;font-size:57.19px;color:#ffffff;font-weight:700;">dbt</div>
<div class="tS" style="left:262.4px;top:26.8px;font-size:26.55px;color:#5ccdcf;font-weight:700;transform:scaleX(0.958);">Develop</div>
<div class="tS" style="left:409.4px;top:26.8px;font-size:26.55px;color:#d5d7dc;font-weight:700;transform:scaleX(0.948);">Deploy</div>
<div class="tS" style="left:579.4px;top:26.8px;font-size:26.55px;color:#d5d7dc;font-weight:700;transform:scaleX(0.972);">Documentation</div>
<div class="tS" style="left:1607.2px;top:28.5px;font-size:26.55px;color:#d5d7dc;font-weight:700;transform:scaleX(0.953);">dbt Learn - mwong</div>
<div class="tS" style="left:1848.7px;top:28.5px;font-size:26.55px;color:#d5d7dc;transform:scaleX(1.245);">/</div>
<div class="tS" style="left:1874.2px;top:28.5px;font-size:26.55px;color:#d5d7dc;transform:scaleX(1.006);">dbt zero</div>
<div class="tS" style="left:53.3px;top:115.4px;font-size:22.88px;color:#d5d7dc;transform:scaleX(1.040);">mwong-d…</div>
<div class="tS" style="left:200.5px;top:115.4px;font-size:22.88px;color:#5ccdcf;transform:scaleX(0.973);">Change branch</div>
<div class="tS" style="left:53.8px;top:192.6px;font-size:27.10px;color:#f4f5f7;font-weight:700;transform:scaleX(0.925);">Version Control</div>
<div class="tS" style="left:39.2px;top:288.8px;font-size:26.83px;color:#ffffff;transform:scaleX(0.973);">Create pull request</div>
<div class="tS" style="left:52.9px;top:594.3px;font-size:26.83px;color:#f4f5f7;font-weight:700;transform:scaleX(0.932);">File Explorer</div>
<div class="tS" style="left:93.8px;top:673.3px;font-size:24.50px;color:#f2f3f5;transform:scaleX(0.938);">dbt-learn-zero</div>
<div class="tS" style="left:108.6px;top:713.3px;font-size:24.50px;color:#f2f3f5;">.github</div>
<div class="tS" style="left:109.8px;top:753.3px;font-size:24.50px;color:#f2f3f5;transform:scaleX(0.901);">analyses</div>
<div class="tS" style="left:110.8px;top:793.3px;font-size:24.50px;color:#9aa0ab;font-style:italic;transform:scaleX(0.917);">dbt_packages</div>
<div class="tS" style="left:111.2px;top:833.3px;font-size:24.50px;color:#9aa0ab;font-style:italic;transform:scaleX(0.905);">logs</div>
<div class="tS" style="left:109.1px;top:873.3px;font-size:24.50px;color:#f2f3f5;transform:scaleX(0.937);">macros</div>
<div class="tS" style="left:109.0px;top:913.3px;font-size:24.50px;color:#f2f3f5;transform:scaleX(0.961);">models</div>
<div class="tS" style="left:125.6px;top:953.3px;font-size:24.50px;color:#f2f3f5;transform:scaleX(1.020);">dim</div>
<div class="tS" style="left:141.6px;top:993.3px;font-size:24.50px;color:#5ccdcf;transform:scaleX(0.934);">dim_hosts_clean.sql</div>
<div class="tS" style="left:141.6px;top:1033.3px;font-size:24.50px;color:#f2f3f5;transform:scaleX(0.943);">dim_listings_clean.sql</div>
<div class="tS" style="left:141.6px;top:1073.3px;font-size:24.50px;color:#f2f3f5;transform:scaleX(0.956);">dim_listings_with_hosts…</div>
<div class="tS" style="left:126.3px;top:1113.3px;font-size:24.50px;color:#f2f3f5;transform:scaleX(0.956);">fct</div>
<div class="tS" style="left:124.8px;top:1153.3px;font-size:24.50px;color:#f2f3f5;">mart</div>
<div class="tS" style="left:126.0px;top:1193.3px;font-size:24.50px;color:#f2f3f5;transform:scaleX(0.900);">src</div>
<div class="tS" style="left:125.9px;top:1233.3px;font-size:24.50px;color:#f2f3f5;transform:scaleX(0.922);">sources.yml</div>
<div class="tS" style="left:110.1px;top:1273.3px;font-size:24.50px;color:#f2f3f5;transform:scaleX(0.881);">seeds</div>
<div class="tS" style="left:110.0px;top:1313.3px;font-size:24.50px;color:#f2f3f5;transform:scaleX(0.916);">snapshots</div>
<div class="tS" style="left:110.8px;top:1353.3px;font-size:24.50px;color:#9aa0ab;font-style:italic;transform:scaleX(0.921);">target</div>
<div class="tS" style="left:110.4px;top:1393.3px;font-size:24.50px;color:#f2f3f5;transform:scaleX(0.912);">tests</div>
<div class="tS" style="left:108.5px;top:1433.3px;font-size:24.50px;color:#f2f3f5;transform:scaleX(0.976);">.gitignore</div>
<div class="tS" style="left:109.7px;top:1473.3px;font-size:24.50px;color:#f2f3f5;transform:scaleX(0.973);">dbt_project.yml</div>
<div class="tS" style="left:108.8px;top:1513.3px;font-size:24.50px;color:#f2f3f5;transform:scaleX(0.860);">README.md</div>
<div class="tS" style="left:466.4px;top:112.7px;font-size:29.28px;color:#9ea3ad;font-weight:700;transform:scaleX(0.883);">.gitignore</div>
<div class="tS" style="left:723.2px;top:112.7px;font-size:29.28px;color:#ffffff;font-weight:700;transform:scaleX(0.889);">dim_host…</div>
<div class="tS" style="left:979.5px;top:112.7px;font-size:29.28px;color:#9ea3ad;font-weight:700;transform:scaleX(0.881);">dim_listings_…</div>
<div class="tS" style="left:1235.2px;top:112.7px;font-size:29.28px;color:#9ea3ad;font-weight:700;transform:scaleX(0.881);">dim_listings_…</div>
<div class="tS" style="left:1490.3px;top:112.7px;font-size:29.28px;color:#9ea3ad;font-weight:700;transform:scaleX(0.923);">mart_fullmo…</div>
<div class="tS" style="left:1747.2px;top:112.7px;font-size:29.28px;color:#9ea3ad;font-weight:700;transform:scaleX(0.838);">src_hosts.sql</div>
<div class="tS" style="left:2003.2px;top:112.7px;font-size:29.28px;color:#9ea3ad;font-weight:700;transform:scaleX(0.838);">src_listings.sql</div>
<div class="tS" style="left:466.5px;top:187.3px;font-size:24.51px;color:#d5d7dc;transform:scaleX(0.965);">models</div>
<div class="tS" style="left:589.2px;top:187.3px;font-size:24.51px;color:#d5d7dc;transform:scaleX(1.014);">dim</div>
<div class="tS" style="left:677.0px;top:187.3px;font-size:24.51px;color:#d5d7dc;transform:scaleX(0.932);">dim_hosts_clean.sql</div>
<div class="tS" style="left:1869.9px;top:187.9px;font-size:27.31px;color:#5ccdcf;transform:scaleX(0.990);">Format</div>
<div class="tS" style="left:2096.2px;top:187.9px;font-size:27.31px;color:#ffffff;transform:scaleX(0.904);">Save</div>
<div class="tS" style="left:548.9px;top:1208.4px;font-size:27.10px;color:#f4f5f7;transform:scaleX(0.973);">Preview</div>
<div class="tS" style="left:782.9px;top:1208.4px;font-size:27.10px;color:#f4f5f7;transform:scaleX(0.993);">Compile</div>
<div class="tS" style="left:1019.4px;top:1208.4px;font-size:27.10px;color:#f4f5f7;transform:scaleX(1.065);">Build</div>
<div class="tS" style="left:1279.4px;top:1207.0px;font-size:29.28px;color:#f4f5f7;transform:scaleX(0.880);">Results</div>
<div class="tS" style="left:1428.2px;top:1207.0px;font-size:29.28px;color:#f4f5f7;transform:scaleX(0.895);">Compiled Code</div>
<div class="tS" style="left:1672.0px;top:1206.3px;font-size:28.05px;color:#f4f5f7;transform:scaleX(0.922);">Lineage</div>
<div class="tS" style="left:556.9px;top:1399.8px;font-size:37.45px;color:#ffffff;font-weight:700;transform:scaleX(0.929);">src_hosts</div>
<div class="tS" style="left:1161.9px;top:1399.8px;font-size:37.45px;color:#ffffff;font-weight:700;transform:scaleX(0.927);">dim_hosts_clean</div>
<div class="tS" style="left:1884.6px;top:1399.8px;font-size:37.45px;color:#ffffff;font-weight:700;transform:scaleX(0.927);">dim_listings_with_hosts</div>
<div style="left:2146px;top:91px;width:64px;height:72px;background:#131825;"></div><div style="left:2144px;top:91px;width:2px;height:72px;background:#4a5160;"></div><svg style="position:absolute;left:2167px;top:108px;" width="30" height="30" viewBox="0 0 30 30"><path d="M15 1 V29 M1 15 H29" stroke="#a1a7b3" stroke-width="4.6"/></svg><div style="left:2106px;top:1301px;width:80px;height:160px;background:rgba(65,71,84,0.86);border-radius:9px;"></div><svg style="position:absolute;left:2131px;top:1326px;" width="30" height="30" viewBox="0 0 30 30"><path d="M2 11 V2 H11 M19 2 H28 V11 M28 19 V28 H19 M11 28 H2 V19" fill="none" stroke="#dcdee3" stroke-width="4.2" stroke-linejoin="round"/></svg><svg style="position:absolute;left:2129px;top:1403px;" width="34" height="34" viewBox="0 0 34 34"><path d="M7.5 10 A12 12 0 1 1 9.5 29" fill="none" stroke="#e5e7eb" stroke-width="4"/><path d="M2 2.5 V15 H14.5" fill="none" stroke="#e5e7eb" stroke-width="4"/></svg><div style="left:0px;top:1533px;width:2210px;height:80px;background:#212735;"></div><div style="left:66px;top:1533px;width:2px;height:77px;background:#4a5160;"></div><div style="left:0px;top:1610px;width:2210px;height:3px;background:#4a5160;"></div><div style="left:2008px;top:1548px;width:138px;height:48px;background:#1d3a36;border-radius:24px;"></div><div style="left:2034px;top:1566px;width:12px;height:12px;background:#6fcf97;border-radius:50%;"></div><div style="left:2177px;top:1557px;width:9.5px;height:9.5px;background:#e5e7eb;border-radius:50%;"></div><div style="left:2177px;top:1567.5px;width:9.5px;height:9.5px;background:#e5e7eb;border-radius:50%;"></div><div style="left:2177px;top:1578px;width:9.5px;height:9.5px;background:#e5e7eb;border-radius:50%;"></div><svg style="position:absolute;left:14px;top:1561px;" width="28" height="19" viewBox="0 0 28 19"><path d="M2.5 16 L14 4.5 L25.5 16" fill="none" stroke="#e5e7eb" stroke-width="4.2"/></svg>
<div class="tS" style="left:99.4px;top:1558.9px;font-size:27.64px;color:#9ca3af;transform:scaleX(0.963);">dbt build --select &lt;model_name&gt;</div>
<div class="tS" style="left:2060.1px;top:1561.7px;font-size:21.92px;color:#6fcf97;transform:scaleX(0.971);">Ready</div>
</body></html>
